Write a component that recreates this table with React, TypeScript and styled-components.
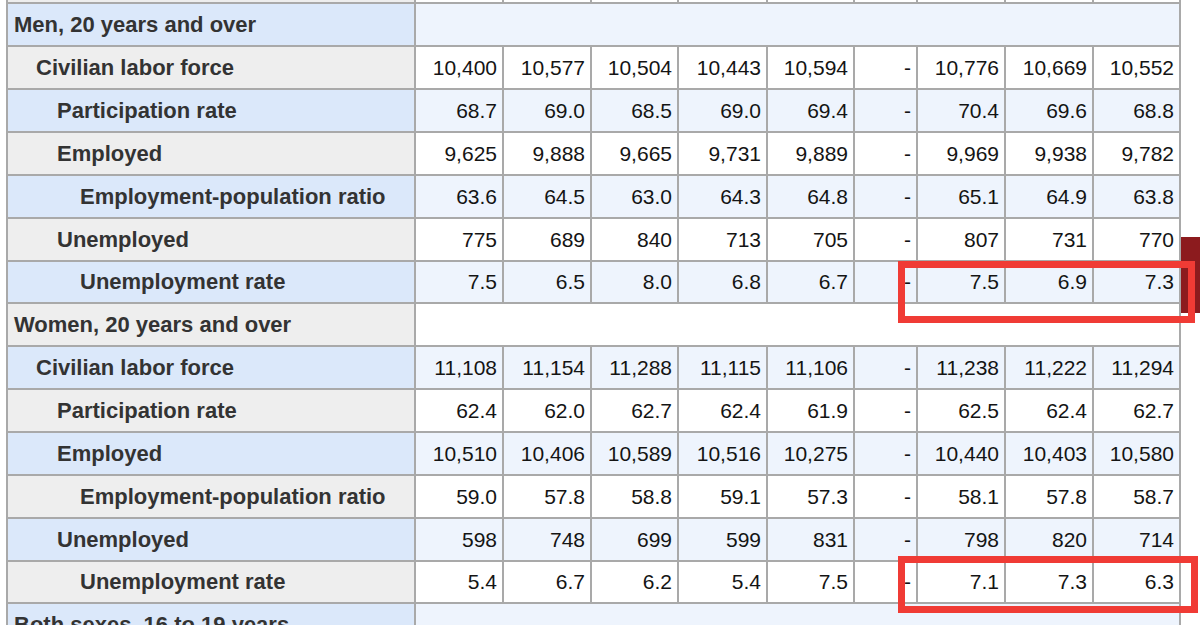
import React from "react";
import styled, { createGlobalStyle } from "styled-components";

const GlobalStyle = createGlobalStyle`
  html, body {
    margin: 0;
    padding: 0;
    background: #ffffff;
  }
  body {
    width: 1200px;
    height: 625px;
    overflow: hidden;
    font-family: "Liberation Sans", Arial, Helvetica, sans-serif;
  }
`;

const COLS = [408, 88, 88, 87, 89, 87, 63, 88, 88, 87];
const INDENT = [6, 28, 49, 72];
const LINE = "#a9a9a9";

const Frame = styled.div`
  position: relative;
  width: 1200px;
  height: 625px;
  overflow: hidden;
  background: #ffffff;
`;

const Grid = styled.div<{ $rows: string }>`
  display: grid;
  grid-template-columns: ${COLS.map((c) => `${c}px`).join(" ")};
  grid-template-rows: ${(p) => p.$rows};
  width: max-content;
  margin: -39px 0 0 6px;
  border-left: 2px solid ${LINE};
`;

const Label = styled.div<{ $level: number; $blue: boolean }>`
  box-sizing: border-box;
  display: flex;
  align-items: center;
  padding-left: ${(p) => INDENT[p.$level]}px;
  border-right: 2px solid ${LINE};
  border-bottom: 2px solid ${LINE};
  background: ${(p) => (p.$blue ? "#dbe8fa" : "#eeeeee")};
  font-weight: bold;
  font-size: 22px;
  color: #333333;
  white-space: nowrap;
  overflow: hidden;
`;

const Value = styled.div<{ $blue: boolean }>`
  box-sizing: border-box;
  display: flex;
  align-items: center;
  justify-content: flex-end;
  padding-right: 5px;
  border-right: 2px solid ${LINE};
  border-bottom: 2px solid ${LINE};
  background: ${(p) => (p.$blue ? "#eef4fd" : "#ffffff")};
  font-size: 21px;
  color: #141414;
  white-space: nowrap;
`;

const Band = styled.div<{ $blue: boolean }>`
  box-sizing: border-box;
  grid-column: 2 / -1;
  border-right: 2px solid ${LINE};
  border-bottom: 2px solid ${LINE};
  background: ${(p) => (p.$blue ? "#eef4fd" : "#ffffff")};
`;

const Highlight = styled.div<{ $x: number; $y: number; $w: number; $h: number }>`
  position: absolute;
  box-sizing: border-box;
  left: ${(p) => p.$x}px;
  top: ${(p) => p.$y}px;
  width: ${(p) => p.$w}px;
  height: ${(p) => p.$h}px;
  border: 7px solid #f03b35;
  pointer-events: none;
`;

const EdgeMark = styled.div`
  position: absolute;
  left: 1181px;
  top: 237px;
  width: 19px;
  height: 76px;
  background: #8c1b1e;
`;

type Row =
  | { kind: "blank" }
  | { kind: "section"; label: string }
  | { kind: "data"; level: number; label: string; values: string[] };

const d = (level: number, label: string, s: string): Row => ({
  kind: "data",
  level,
  label,
  values: s.split(" "),
});

const ROWS: Row[] = [
  { kind: "blank" },
  { kind: "section", label: "Men, 20 years and over" },
  d(1, "Civilian labor force", "10,400 10,577 10,504 10,443 10,594 - 10,776 10,669 10,552"),
  d(2, "Participation rate", "68.7 69.0 68.5 69.0 69.4 - 70.4 69.6 68.8"),
  d(2, "Employed", "9,625 9,888 9,665 9,731 9,889 - 9,969 9,938 9,782"),
  d(3, "Employment-population ratio", "63.6 64.5 63.0 64.3 64.8 - 65.1 64.9 63.8"),
  d(2, "Unemployed", "775 689 840 713 705 - 807 731 770"),
  d(3, "Unemployment rate", "7.5 6.5 8.0 6.8 6.7 - 7.5 6.9 7.3"),
  { kind: "section", label: "Women, 20 years and over" },
  d(1, "Civilian labor force", "11,108 11,154 11,288 11,115 11,106 - 11,238 11,222 11,294"),
  d(2, "Participation rate", "62.4 62.0 62.7 62.4 61.9 - 62.5 62.4 62.7"),
  d(2, "Employed", "10,510 10,406 10,589 10,516 10,275 - 10,440 10,403 10,580"),
  d(3, "Employment-population ratio", "59.0 57.8 58.8 59.1 57.3 - 58.1 57.8 58.7"),
  d(2, "Unemployed", "598 748 699 599 831 - 798 820 714"),
  d(3, "Unemployment rate", "5.4 6.7 6.2 5.4 7.5 - 7.1 7.3 6.3"),
  { kind: "section", label: "Both sexes, 16 to 19 years" },
];

// Unemployment-rate rows sit 1px shorter in the source table.
const ROW_HEIGHTS = ROWS.map((r) =>
  r.kind === "data" && r.label === "Unemployment rate" ? 42 : 43
);

export default function App() {
  return (
    <>
      <GlobalStyle />
      <Frame>
        <Grid $rows={ROW_HEIGHTS.map((h) => `${h}px`).join(" ")}>
          {ROWS.map((row, i) => {
            const blue = i % 2 === 1;
            if (row.kind === "blank") {
              return (
                <React.Fragment key={i}>
                  <Label $level={0} $blue={blue} />
                  {COLS.slice(1).map((_, j) => (
                    <Value key={j} $blue={blue} />
                  ))}
                </React.Fragment>
              );
            }
            if (row.kind === "section") {
              return (
                <React.Fragment key={i}>
                  <Label $level={0} $blue={blue}>
                    {row.label}
                  </Label>
                  <Band $blue={blue} />
                </React.Fragment>
              );
            }
            return (
              <React.Fragment key={i}>
                <Label $level={row.level} $blue={blue}>
                  {row.label}
                </Label>
                {row.values.map((v, j) => (
                  <Value key={j} $blue={blue}>
                    {v}
                  </Value>
                ))}
              </React.Fragment>
            );
          })}
        </Grid>
        <EdgeMark />
        <Highlight $x={898} $y={261} $w={297} $h={62} />
        <Highlight $x={898} $y={556} $w={300} $h={57} />
      </Frame>
    </>
  );
}
